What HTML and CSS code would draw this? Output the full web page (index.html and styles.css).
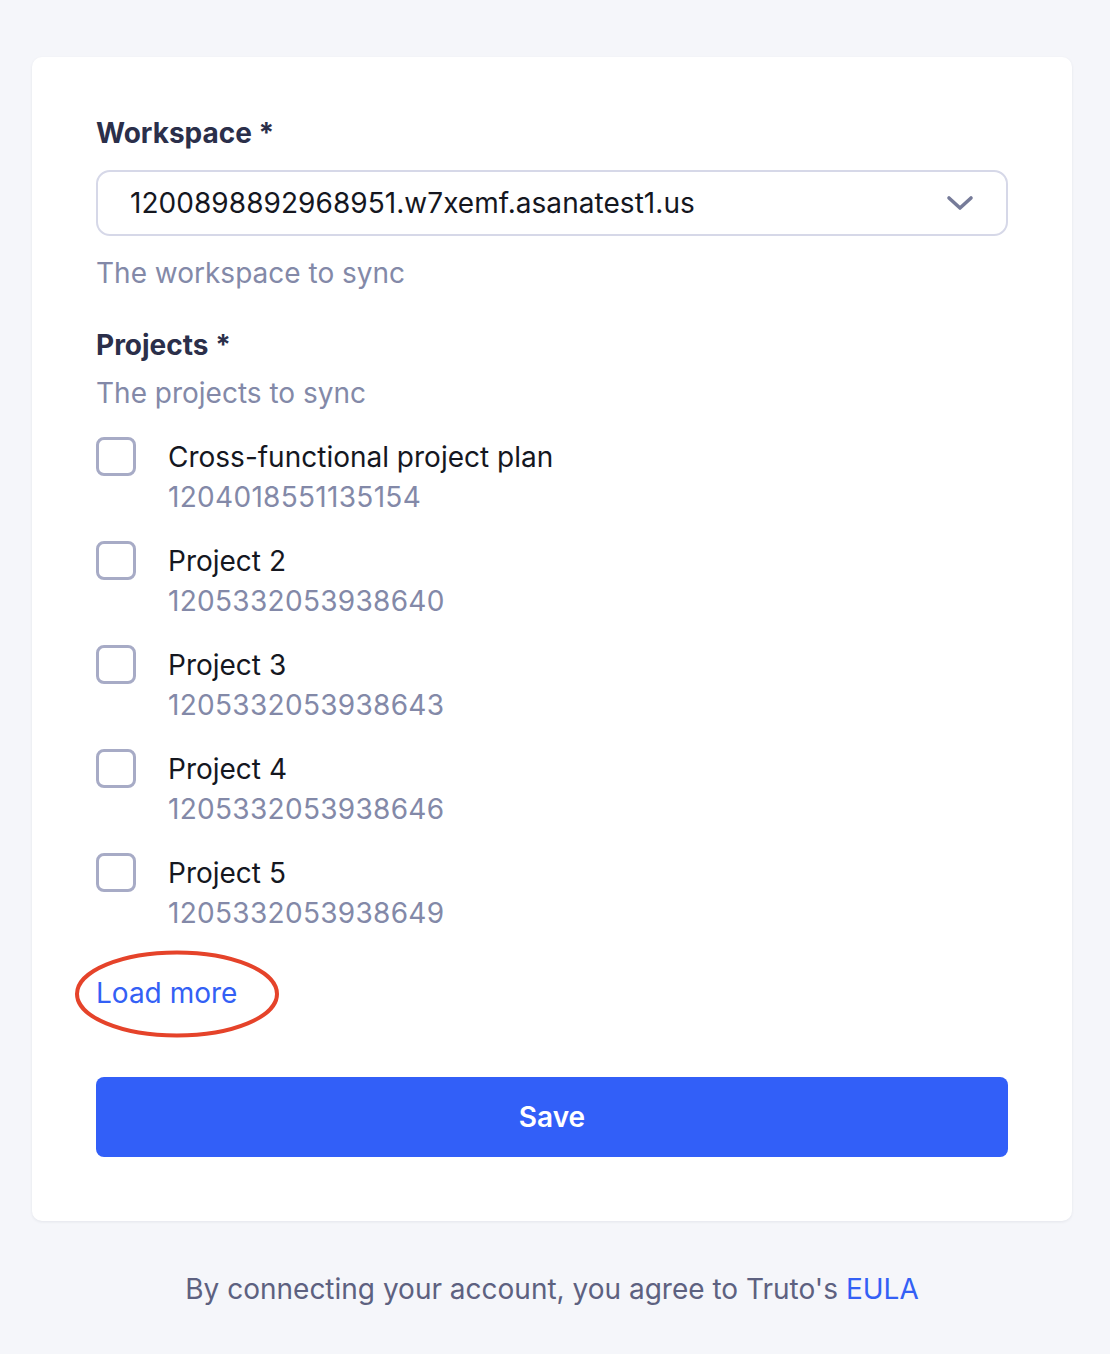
FILE: index.html
```html
<!DOCTYPE html>
<html lang="en">
<head>
<meta charset="utf-8">
<title>Connect</title>
<link rel="stylesheet" href="styles.css">
</head>
<body>
<div class="page">
  <form class="card">
    <div class="field-label">Workspace *</div>
    <div class="select">
      <span class="select-value">1200898892968951.w7xemf.asanatest1.us</span>
      <svg class="chevron" width="28" height="16" viewBox="0 0 28 16"><path d="M3 3 L14 13 L25 3" fill="none" stroke="#767b99" stroke-width="3.6" stroke-linecap="round" stroke-linejoin="round"/></svg>
    </div>
    <div class="help help-after-select">The workspace to sync</div>

    <div class="field-label projects-label">Projects *</div>
    <div class="help help-projects">The projects to sync</div>

    <div class="options">
      <label class="option"><span class="box"></span><span class="option-text"><span class="option-name">Cross-functional project plan</span><span class="option-id">1204018551135154</span></span></label>
      <label class="option"><span class="box"></span><span class="option-text"><span class="option-name">Project 2</span><span class="option-id">1205332053938640</span></span></label>
      <label class="option"><span class="box"></span><span class="option-text"><span class="option-name">Project 3</span><span class="option-id">1205332053938643</span></span></label>
      <label class="option"><span class="box"></span><span class="option-text"><span class="option-name">Project 4</span><span class="option-id">1205332053938646</span></span></label>
      <label class="option"><span class="box"></span><span class="option-text"><span class="option-name">Project 5</span><span class="option-id">1205332053938649</span></span></label>
    </div>

    <div class="load-more-wrap">
      <a class="load-more" href="#">Load more</a>
      <svg class="annotation" width="210" height="92" viewBox="0 0 210 92"><ellipse cx="105" cy="46" rx="100" ry="41.5" fill="none" stroke="#e5432a" stroke-width="4"/></svg>
    </div>

    <button type="button" class="save">Save</button>
  </form>
  <p class="footer">By connecting your account, you agree to Truto's <a href="#">EULA</a></p>
</div>
</body>
</html>
```
FILE: styles.css
```css
* { box-sizing: border-box; }
html, body { margin: 0; padding: 0; }
body {
  background: #f5f6fa;
  font-family: Inter, "Noto Sans", sans-serif;
  font-size: 28px;
  line-height: 40px;
  color: #15171f;
}
.page {
  width: 1040px;
  margin-left: 32px;
  padding-top: 57px;
}
.card {
  display: flex;
  flex-direction: column;
  background: #ffffff;
  border-radius: 10px;
  box-shadow: 0 1px 3px rgba(30, 35, 70, 0.08);
  padding: 56px 64px 64px 64px;
}
.field-label {
  font-weight: 700;
  color: #2b2f4a;
}
.select {
  margin-top: 17px;
  height: 66px;
  border: 2px solid #d6d8e8;
  border-radius: 14px;
  display: flex;
  align-items: center;
  justify-content: space-between;
  padding: 0 32px 0 32px;
}
.select-value { color: #15171f; letter-spacing: 0.05px; }
.chevron { display: block; }
.help { color: #8389a8; }
.help-after-select { margin-top: 17px; }
.projects-label { margin-top: 32px; }
.help-projects { margin-top: 8px; }
.options {
  margin-top: 24px;
  display: flex;
  flex-direction: column;
  gap: 24px;
}
.option {
  display: flex;
  align-items: flex-start;
  gap: 32px;
}
.box {
  flex: none;
  width: 40px;
  height: 39px;
  border: 3px solid #a7abc6;
  border-radius: 8px;
  background: #fff;
}
.option-text { display: flex; flex-direction: column; }
.option-name { color: #15171f; }
.option-id { color: #8389a8; letter-spacing: 0.3px; }
.load-more-wrap {
  position: relative;
  margin-top: 40px;
  align-self: flex-start;
}
.load-more {
  color: #3360f5;
  text-decoration: none;
}
.annotation {
  position: absolute;
  left: -24px;
  top: -25px;
  pointer-events: none;
}
.save {
  margin-top: 64px;
  height: 80px;
  width: 100%;
  border: none;
  border-radius: 8px;
  background: #325ff8;
  color: #ffffff;
  font-family: Inter, "Noto Sans", sans-serif;
  font-size: 28px;
  font-weight: 600;
}
.footer {
  margin: 48px 0 0 0;
  text-align: center;
  color: #5d6180;
}
.footer a {
  color: #3360f5;
  text-decoration: none;
}
```
